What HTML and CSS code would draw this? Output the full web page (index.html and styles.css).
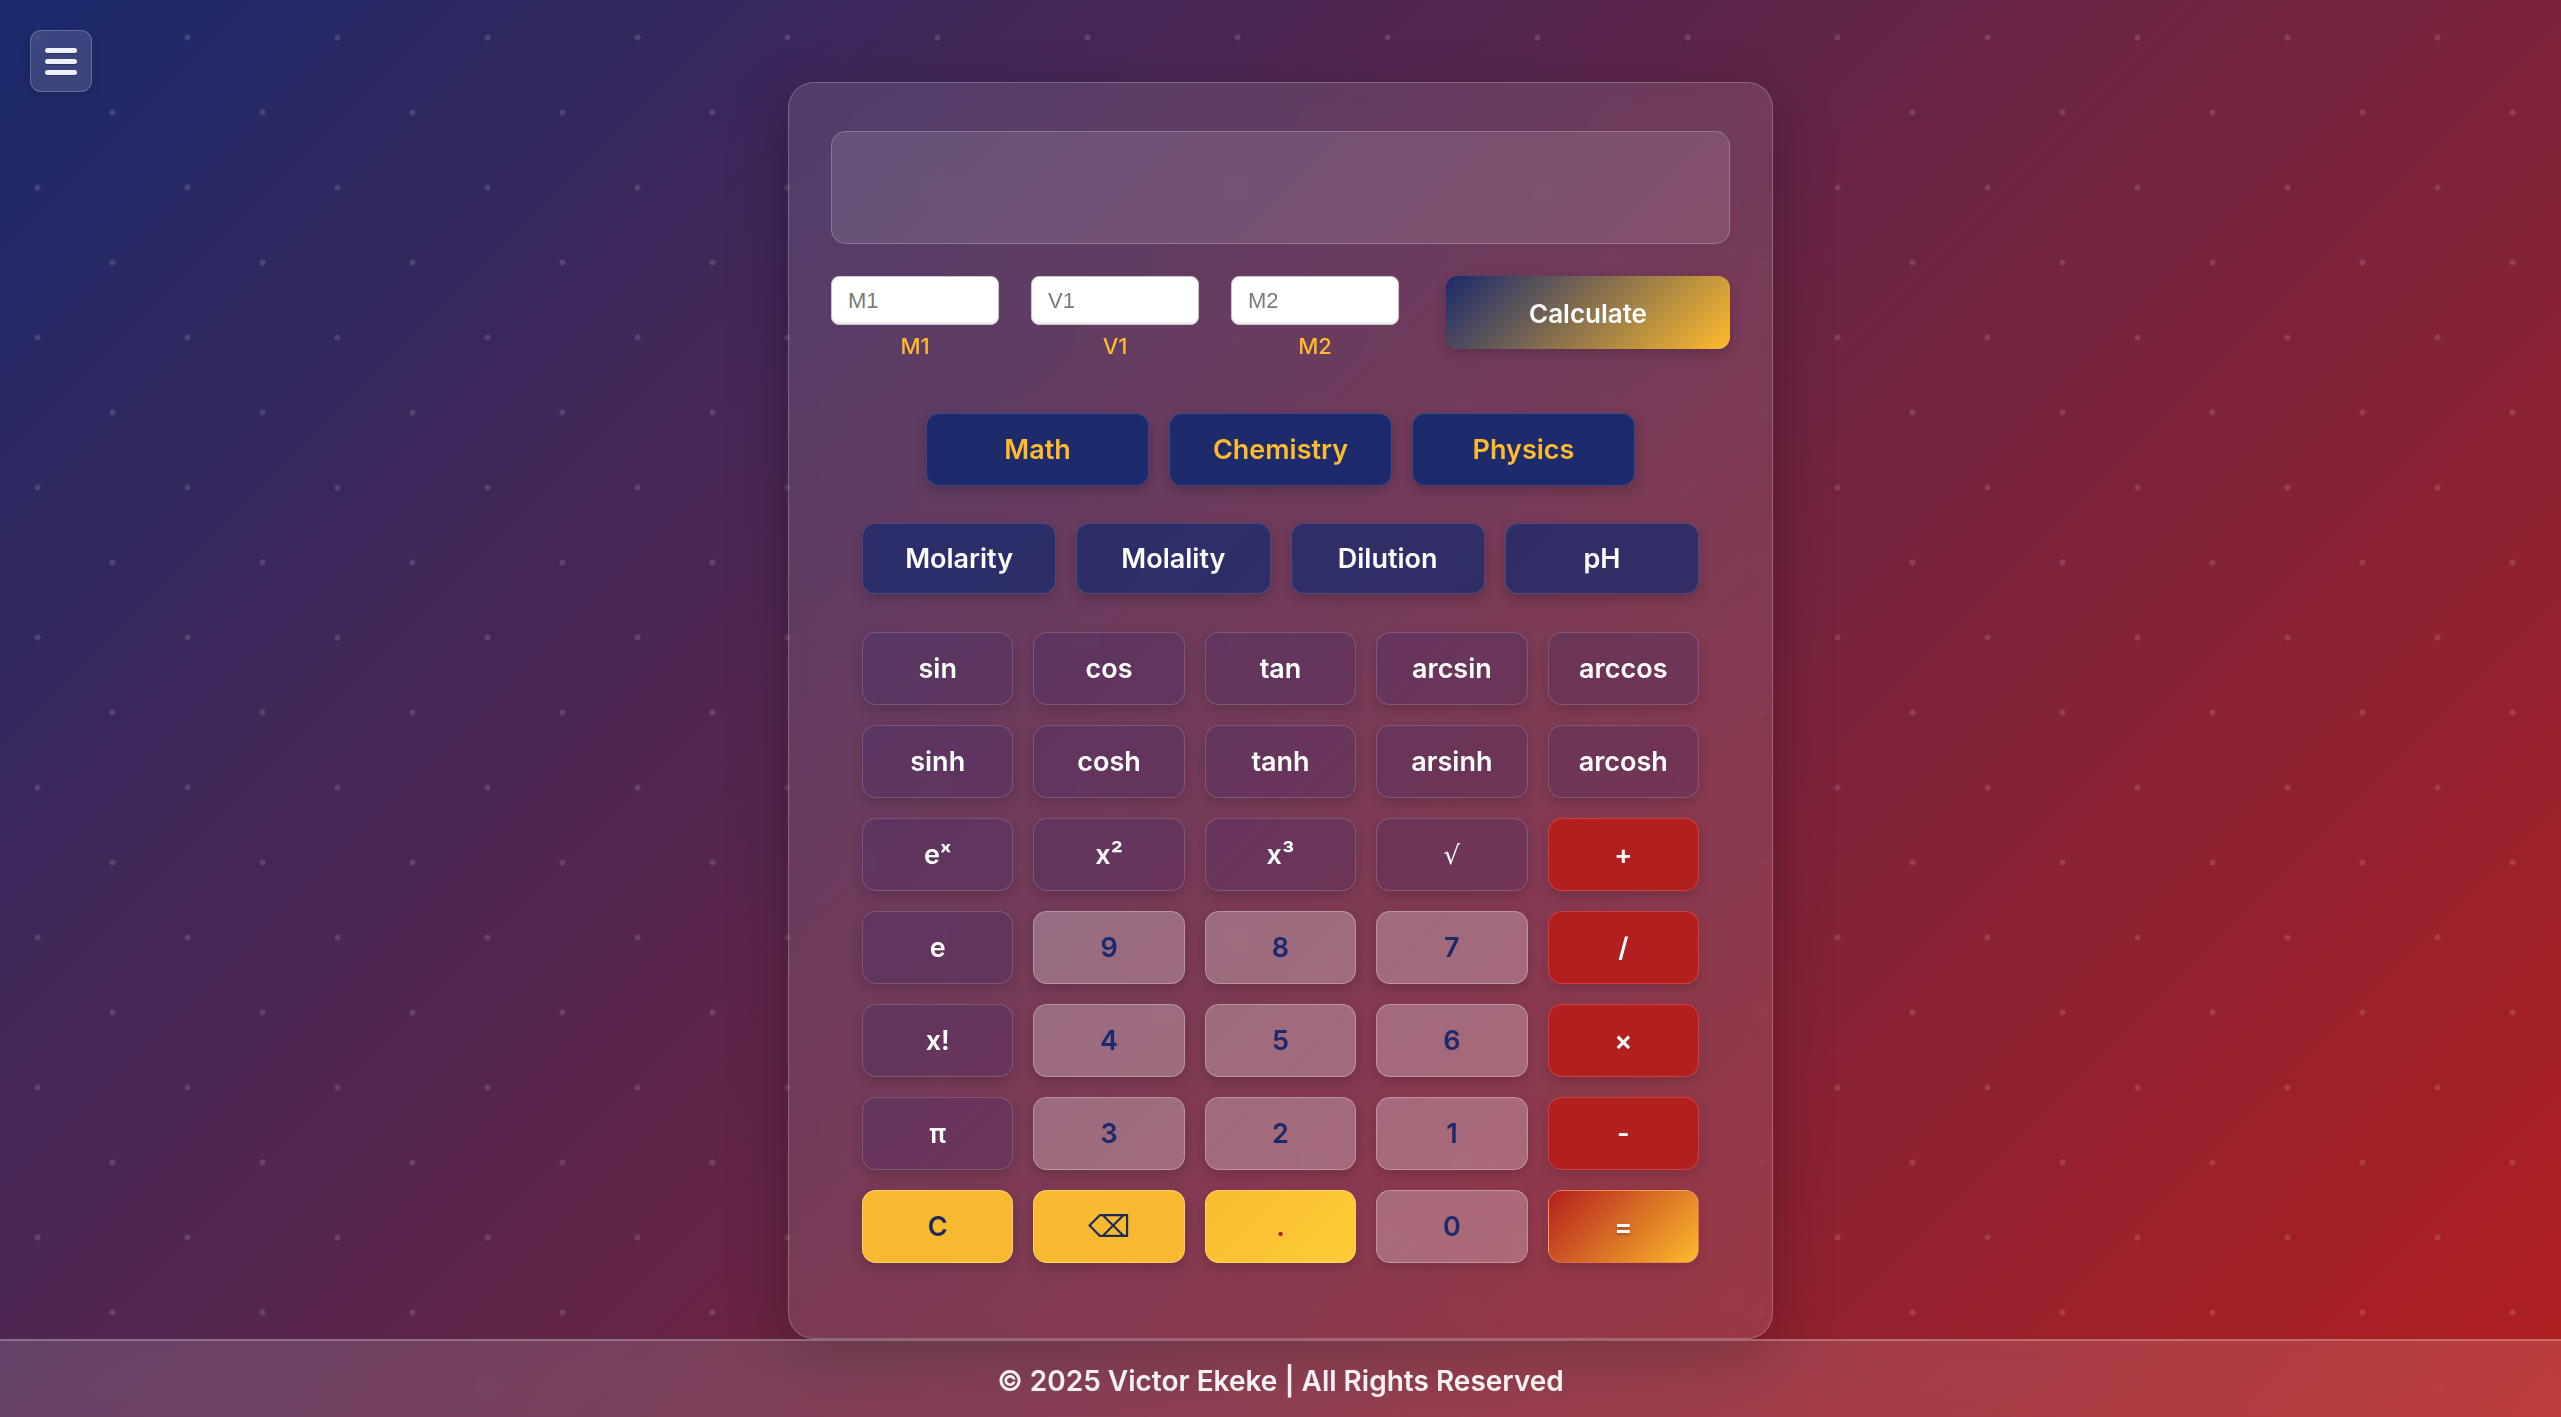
FILE: index.html
```html
<!DOCTYPE html>
<html lang="en">
<head>
<meta charset="UTF-8">
<title>Scientific Calculator</title>
<link rel="stylesheet" href="styles.css">
</head>
<body>
  <button class="menu-btn" aria-label="Menu">
    <span class="bar"></span><span class="bar"></span><span class="bar"></span>
  </button>
  <main class="main">
    <div class="calculator">
      <div class="display"></div>
      <div class="inputs-row">
        <div class="field"><input class="num-input" type="text" placeholder="M1"><span class="field-label">M1</span></div>
        <div class="field"><input class="num-input" type="text" placeholder="V1"><span class="field-label">V1</span></div>
        <div class="field"><input class="num-input" type="text" placeholder="M2"><span class="field-label">M2</span></div>
        <button class="calc-btn">Calculate</button>
      </div>
      <div class="tabs">
        <button class="tab">Math</button>
        <button class="tab">Chemistry</button>
        <button class="tab">Physics</button>
      </div>
      <div class="subtabs">
        <button class="subtab">Molarity</button>
        <button class="subtab">Molality</button>
        <button class="subtab">Dilution</button>
        <button class="subtab">pH</button>
      </div>
      <div class="keypad">
        <button class="key fn">sin</button>
        <button class="key fn">cos</button>
        <button class="key fn">tan</button>
        <button class="key fn">arcsin</button>
        <button class="key fn">arccos</button>

        <button class="key fn">sinh</button>
        <button class="key fn">cosh</button>
        <button class="key fn">tanh</button>
        <button class="key fn">arsinh</button>
        <button class="key fn">arcosh</button>

        <button class="key fn">eˣ</button>
        <button class="key fn">x²</button>
        <button class="key fn">x³</button>
        <button class="key fn sqrt">√</button>
        <button class="key op">+</button>

        <button class="key fn">e</button>
        <button class="key num">9</button>
        <button class="key num">8</button>
        <button class="key num">7</button>
        <button class="key op">/</button>

        <button class="key fn">x!</button>
        <button class="key num">4</button>
        <button class="key num">5</button>
        <button class="key num">6</button>
        <button class="key op">×</button>

        <button class="key fn">π</button>
        <button class="key num">3</button>
        <button class="key num">2</button>
        <button class="key num">1</button>
        <button class="key op">-</button>

        <button class="key clear">C</button>
        <button class="key clear back">⌫</button>
        <button class="key dot">.</button>
        <button class="key num">0</button>
        <button class="key equals">=</button>
      </div>
    </div>
  </main>
  <footer class="footer">© 2025 Victor Ekeke | All Rights Reserved</footer>
</body>
</html>
```

FILE: styles.css
```css
* { box-sizing: border-box; }

html, body { height: 100%; }

body {
  margin: 0;
  min-height: 100vh;
  overflow: hidden;
  display: flex;
  flex-direction: column;
  font-family: "Inter", "Noto Sans", sans-serif;
  color: #fff;
  background-color: #4a2552;
  background-image:
    radial-gradient(circle at 25% 25%, rgba(255,255,255,0.13) 0, rgba(255,255,255,0.13) 2.5px, transparent 3.5px),
    radial-gradient(circle at 75% 75%, rgba(255,255,255,0.13) 0, rgba(255,255,255,0.13) 2.5px, transparent 3.5px),
    linear-gradient(135deg, #1a2a6c 0%, #b21f1f 100%);
  background-size: 150px 150px, 150px 150px, 100% 100%;
  background-repeat: repeat, repeat, no-repeat;
}

button { font-family: inherit; cursor: pointer; }

.menu-btn {
  position: absolute;
  top: 30px;
  left: 30px;
  width: 62px;
  height: 62px;
  border-radius: 11px;
  border: 1px solid rgba(255,255,255,0.22);
  background: rgba(255,255,255,0.13);
  backdrop-filter: blur(10px);
  box-shadow: 0 4px 10px rgba(0,0,0,0.15);
  display: flex;
  flex-direction: column;
  align-items: center;
  justify-content: center;
  gap: 6px;
  padding: 0;
}

.menu-btn .bar {
  display: block;
  width: 32px;
  height: 5px;
  border-radius: 3px;
  background: #eef0ff;
  box-shadow: 0 1px 1px rgba(0,0,0,0.25);
}

.main {
  flex: 1;
  display: flex;
  justify-content: center;
  align-items: flex-start;
  padding-top: 82px;
}

.calculator {
  width: 985px;
  border-radius: 26px;
  border: 1px solid rgba(255,255,255,0.22);
  background: rgba(255,255,255,0.1);
  backdrop-filter: blur(12px);
  box-shadow: 0 20px 60px rgba(0,0,0,0.28);
  padding: 48px 42px 75px;
}

.display {
  height: 113px;
  border-radius: 15px;
  border: 1px solid rgba(255,255,255,0.22);
  background: rgba(255,255,255,0.11);
}

.inputs-row {
  margin-top: 32px;
  height: 73px;
  display: flex;
  align-items: flex-start;
  gap: 32px;
}

.field {
  width: 168px;
  display: flex;
  flex-direction: column;
  align-items: center;
}

.num-input {
  width: 168px;
  height: 49px;
  border-radius: 8px;
  border: 1px solid #cdc3d2;
  box-shadow: inset 0 -2px 0 rgba(0,0,0,0.07);
  background: #fff;
  padding: 0 16px;
  font-family: "Liberation Sans", Arial, sans-serif;
  font-size: 22px;
  color: #333;
  outline: none;
}

.num-input::placeholder { color: #7a7a7a; }

.field-label {
  margin-top: 8px;
  font-size: 22px;
  font-weight: 500;
  color: #fdbb2d;
  line-height: 1.2;
}

.calc-btn {
  margin-left: auto;
  width: 284px;
  height: 73px;
  border: none;
  border-radius: 12px;
  background: linear-gradient(135deg, #1a2a6c 0%, #fdbb2d 100%);
  color: #fff;
  font-size: 26px;
  font-weight: 600;
  padding-top: 2px;
  box-shadow: 0 4px 12px rgba(0,0,0,0.18);
}

.tabs {
  margin-top: 64px;
  display: flex;
  justify-content: center;
  gap: 20px;
}

.tab {
  width: 223px;
  height: 73px;
  border-radius: 13px;
  border: 1px solid rgba(255,255,255,0.14);
  background: #1d2a6b;
  color: #fdbb2d;
  font-size: 27px;
  font-weight: 600;
  box-shadow: 0 5px 12px rgba(0,0,0,0.2);
}

.subtabs {
  width: 837px;
  margin: 37px auto 0;
  display: grid;
  grid-template-columns: repeat(4, 1fr);
  gap: 20px;
}

.subtab {
  height: 71px;
  border-radius: 13px;
  border: 1px solid rgba(255,255,255,0.14);
  background: rgba(26,42,108,0.76);
  color: #fff;
  font-size: 27px;
  font-weight: 600;
  box-shadow: 0 5px 12px rgba(0,0,0,0.18);
}

.keypad {
  width: 837px;
  margin: 38px auto 0;
  display: grid;
  grid-template-columns: repeat(5, 1fr);
  grid-auto-rows: 73px;
  gap: 20px;
}

.key {
  border-radius: 14px;
  border: 1px solid rgba(255,255,255,0.2);
  font-size: 27px;
  font-weight: 600;
  box-shadow: 0 5px 12px rgba(0,0,0,0.15);
  padding: 0;
}

.key.fn {
  background: rgba(40,36,110,0.2);
  border-color: rgba(255,255,255,0.17);
  color: #fff;
}

.key.sqrt { font-weight: 400; font-family: "DejaVu Sans", sans-serif; font-size: 26px; }

.key.num {
  background: rgba(255,255,255,0.25);
  border-color: rgba(255,255,255,0.28);
  color: #1a2a6c;
}

.key.op {
  background: #b21f1f;
  border-color: rgba(255,110,110,0.4);
  color: #fff;
}

.key.clear {
  background: #f7b92f;
  border-color: rgba(255,230,150,0.6);
  color: #1e2a5a;
}

.key.back { font-weight: 400; font-family: "DejaVu Sans", sans-serif; font-size: 30px; }

.key.dot {
  background: linear-gradient(135deg, #f8bc2f 0%, #ffcb38 100%);
  border-color: rgba(255,230,150,0.6);
  color: #b21f1f;
}

.key.equals {
  background: linear-gradient(135deg, #b21f1f 0%, #fdbb2d 100%);
  border-color: rgba(255,160,120,0.5);
  color: #fff;
  text-shadow: 0 2px 3px rgba(0,0,0,0.25);
}

.footer {
  height: 78px;
  border-top: 2px solid rgba(255,255,255,0.25);
  background: rgba(255,255,255,0.13);
  backdrop-filter: blur(10px);
  display: flex;
  align-items: center;
  justify-content: center;
  padding-top: 4px;
  font-size: 28px;
  font-weight: 600;
  color: rgba(255,255,255,0.93);
}
```
